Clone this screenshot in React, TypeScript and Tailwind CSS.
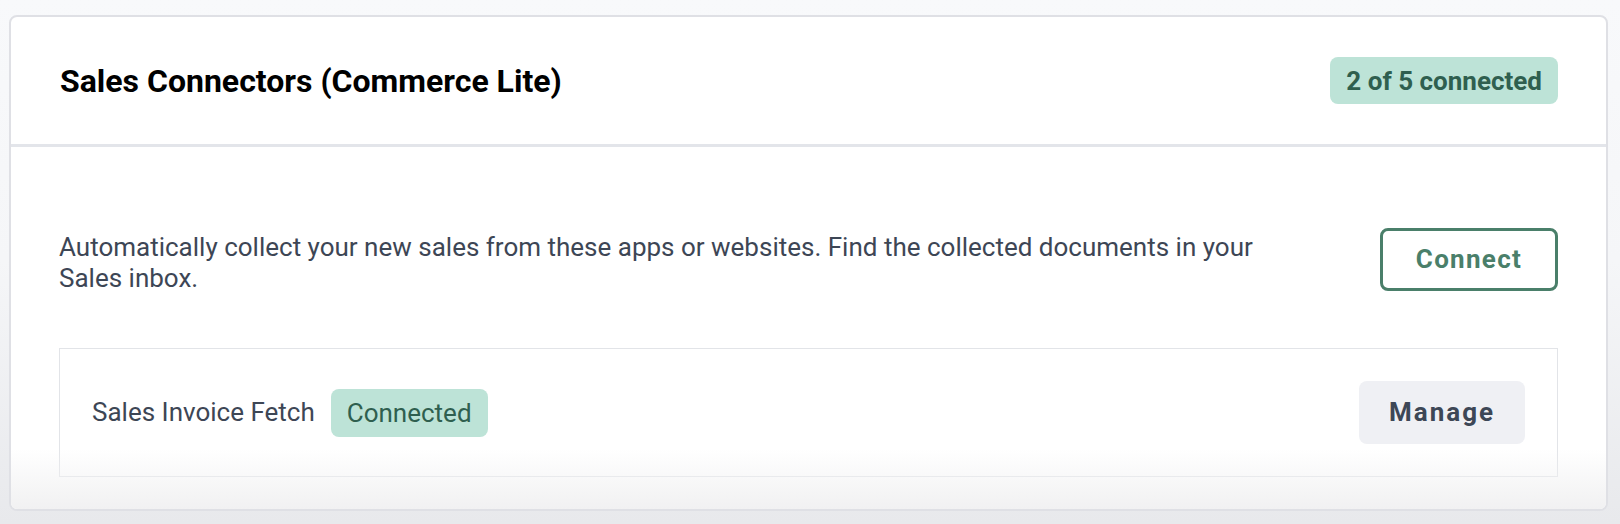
import React from 'react'

const font = { fontFamily: 'Roboto, "Noto Sans", sans-serif' }

function StatusBadge({ children, bold }: { children: React.ReactNode; bold?: boolean }) {
  return (
    <span
      className={
        'inline-flex items-center rounded-lg bg-[#bde3d7] text-[#2f5f4f] text-[26px] leading-none ' +
        (bold ? 'h-[47px] px-[16px] font-bold' : 'h-[48px] px-[16px] font-normal')
      }
    >
      {children}
    </span>
  )
}

function ConnectorRow() {
  return (
    <div className="flex h-[129px] items-center justify-between border border-[#e2e4e8] px-8">
      <div className="flex items-center gap-4">
        <span className="text-[26px] text-[#3d4655]">Sales Invoice Fetch</span>
        <StatusBadge>Connected</StatusBadge>
      </div>
      <button className="h-[63px] w-[166px] rounded-lg bg-[#eff0f4] text-[26px] font-bold tracking-[2px] text-[#3d4756]">
        Manage
      </button>
    </div>
  )
}

export default function App() {
  return (
    <div
      className="h-[524px] bg-gradient-to-b from-[#f8f9fb] via-[#f5f6f8] to-[#e8e9ec] pt-[15px] pl-[9px] pr-[12px]"
      style={font}
    >
      <div className="relative overflow-hidden rounded-lg border-2 border-[#dfe0e5] bg-white">
        <div className="flex h-[130px] items-center justify-between border-b-[3px] border-[#e3e5ea] pl-[49px] pr-[48px]">
          <h2 className="text-[32px] font-bold text-black">Sales Connectors (Commerce Lite)</h2>
          <StatusBadge bold>2 of 5 connected</StatusBadge>
        </div>

        <div className="pl-[48px] pr-[48px] pt-[81px] pb-[32px]">
          <div className="flex items-start justify-between">
            <p className="mt-[4px] max-w-[1210px] text-[26px] leading-[31px] text-[#3d4655]">
              Automatically collect your new sales from these apps or websites. Find the collected documents in your
              Sales inbox.
            </p>
            <button className="h-[63px] w-[178px] rounded-lg border-[3px] border-[#4a7f6a] text-[26px] font-bold tracking-[1.3px] text-[#4a7f6a]">
              Connect
            </button>
          </div>

          <div className="mt-[54px]">
            <ConnectorRow />
          </div>
        </div>

        <div className="pointer-events-none absolute inset-x-0 bottom-0 h-[60px] bg-gradient-to-b from-white/0 to-[#f1f1f2]" />
      </div>
    </div>
  )
}
